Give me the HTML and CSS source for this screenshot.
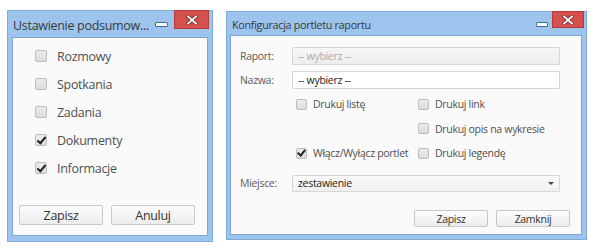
FILE: index.html
```html
<!DOCTYPE html>
<html lang="pl">
<head>
<meta charset="utf-8">
<link rel="stylesheet" href="styles.css">
</head>
<body>
<div class="stage">
  <div class="win win-left">
    <div class="titlebar">
      <span class="title">Ustawienie podsumow...</span>
      <span class="minbtn"></span>
      <span class="closebtn"><svg width="12" height="10" viewBox="0 0 12 10"><path d="M2 1.5 L10 8.5 M10 1.5 L2 8.5" stroke="#6b2a2a" stroke-width="3.4" stroke-linecap="square"/><path d="M2 1.5 L10 8.5 M10 1.5 L2 8.5" stroke="#fff" stroke-width="1.8" stroke-linecap="square"/></svg></span>
    </div>
    <div class="body">
      <ul class="checklist">
        <li><span class="cb"></span>Rozmowy</li>
        <li><span class="cb"></span>Spotkania</li>
        <li><span class="cb"></span>Zadania</li>
        <li><span class="cb checked"></span>Dokumenty</li>
        <li><span class="cb checked"></span>Informacje</li>
      </ul>
      <div class="btnrow">
        <button class="btn wide">Zapisz</button>
        <button class="btn wide">Anuluj</button>
      </div>
    </div>
  </div>

  <div class="win win-right">
    <div class="titlebar small">
      <span class="title">Konfiguracja portletu raportu</span>
      <span class="minbtn"></span>
      <span class="closebtn"><svg width="12" height="10" viewBox="0 0 12 10"><path d="M2 1.5 L10 8.5 M10 1.5 L2 8.5" stroke="#6b2a2a" stroke-width="3.4" stroke-linecap="square"/><path d="M2 1.5 L10 8.5 M10 1.5 L2 8.5" stroke="#fff" stroke-width="1.8" stroke-linecap="square"/></svg></span>
    </div>
    <div class="body form">
      <div class="row">
        <label class="lbl">Raport:</label>
        <div class="input disabled">-- wybierz --</div>
      </div>
      <div class="row">
        <label class="lbl">Nazwa:</label>
        <div class="input">-- wybierz --</div>
      </div>
      <div class="row">
        <span class="lbl"></span>
        <div class="opts">
          <div class="opt"><span class="cb sm"></span>Drukuj listę</div>
          <div class="opt"><span class="cb sm"></span>Drukuj link</div>
          <div class="opt"></div>
          <div class="opt"><span class="cb sm"></span>Drukuj opis na wykresie</div>
          <div class="opt"><span class="cb sm checked"></span>Włącz/Wyłącz portlet</div>
          <div class="opt"><span class="cb sm"></span>Drukuj legendę</div>
        </div>
      </div>
      <div class="row place">
        <label class="lbl">Miejsce:</label>
        <div class="input select">zestawienie<span class="arrow"></span></div>
      </div>
      <div class="btnrow right">
        <button class="btn narrow">Zapisz</button>
        <button class="btn narrow">Zamknij</button>
      </div>
    </div>
  </div>
</div>
</body>
</html>
```
FILE: styles.css
```css
* { box-sizing: border-box; }
html, body { margin: 0; padding: 0; background: #fff; }
body {
  font-family: "Open Sans", "Noto Sans", sans-serif;
  color: #444;
  width: 597px;
  height: 250px;
  overflow: hidden;
}
.stage {
  display: flex;
  align-items: flex-start;
  padding: 10px 0 0 7px;
  gap: 13px;
}
.win {
  background: #9cc4ec;
  border: 1px solid #7eaad8;
  display: flex;
  flex-direction: column;
}
.win-left { width: 206px; height: 232px; padding: 0 4px 5px 4px; }
.win-right { width: 361px; height: 229px; padding: 0 4px 4px 3px; margin-top: 1px; }

.titlebar {
  height: 26px;
  display: flex;
  align-items: flex-start;
}
.titlebar.small { height: 23px; }
.title {
  font-size: 12.5px;
  color: #3a3a3a;
  padding: 6px 0 0 1px;
  flex: 1;
  white-space: nowrap;
  letter-spacing: -0.3px;
}
.titlebar.small .title { font-size: 10.8px; padding: 5px 0 0 2px; letter-spacing: -0.3px; }
.minbtn {
  width: 13px;
  height: 5px;
  border: 1px solid #3d6d9e;
  background: #fff;
  border-radius: 1px;
  margin: 11px 6px 0 0;
}
.titlebar.small .minbtn { margin: 10px 4px 0 0; width: 12px; }
.closebtn {
  width: 35px;
  height: 19px;
  margin-top: -1px;
  margin-right: -1px;
  background: #d6504e;
  border: 1px solid #b33c3a;
  display: flex;
  align-items: center;
  justify-content: center;
}
.titlebar.small .closebtn { width: 32px; height: 17px; margin-right: -2px; }

.body {
  flex: 1;
  background: #fafafa;
  border: 1px solid #7fa6cf;
  display: flex;
  flex-direction: column;
}

.checklist {
  list-style: none;
  margin: 0;
  padding: 4px 0 0 22px;
  flex: 1;
}
.checklist li {
  height: 28px;
  display: flex;
  align-items: center;
  font-size: 12.5px;
  color: #505050;
  letter-spacing: -0.3px;
}
.cb {
  width: 12px;
  height: 12px;
  border: 1px solid #bdbdbd;
  border-radius: 2px;
  background: linear-gradient(#ececec, #dcdcdc);
  margin-right: 10px;
  display: inline-flex;
  align-items: center;
  justify-content: center;
  flex: none;
}
.cb.checked::after {
  content: "";
  width: 3px;
  height: 7px;
  border: solid #222;
  border-width: 0 2px 2px 0;
  transform: rotate(40deg);
  margin-top: -2px;
}
.cb.sm { width: 11px; height: 11px; margin-right: 6px; }
.cb.sm.checked::after { width: 3px; height: 6px; }

.btnrow {
  display: flex;
  gap: 8px;
  padding: 0 0 10px 6px;
}
.btn {
  font-family: inherit;
  font-size: 12.5px;
  color: #333;
  background: linear-gradient(#fdfdfd, #ececec);
  border: 1px solid #c9c9c9;
  border-radius: 2px;
  height: 20px;
  padding: 0;
  letter-spacing: -0.3px;
}
.btn.wide { width: 84px; }
.btn.narrow { width: 74px; height: 17px; font-size: 10.5px; }

.form { padding: 11px 21px 0 9px; font-size: 10.5px; }
.row { display: flex; align-items: center; margin-bottom: 6px; }
.lbl { width: 52px; flex: none; color: #5a5a5a; letter-spacing: -0.3px; }
.input {
  flex: 1;
  height: 18px;
  border: 1px solid #d6d6d6;
  background: #fff;
  padding: 0 5px;
  display: flex;
  align-items: center;
  color: #222;
  letter-spacing: -0.3px;
  border-radius: 1px;
}
.input.disabled { background: linear-gradient(#f6f6f6, #eeeeee); color: #aaa; }
.opts {
  flex: 1;
  display: grid;
  grid-template-columns: 122px 1fr;
  grid-auto-rows: 24.5px;
  padding-left: 4px;
  margin-top: -3px;
}
.opt { display: flex; align-items: center; color: #505050; letter-spacing: -0.3px; }
.row.place { margin-top: 3px; margin-bottom: 0; }
.select { height: 17px; background: linear-gradient(#fbfbfb, #f0f0f0); position: relative; }
.arrow {
  position: absolute;
  right: 5px;
  top: 6px;
  border-left: 3px solid transparent;
  border-right: 3px solid transparent;
  border-top: 3px solid #444;
}
.btnrow.right {
  justify-content: flex-end;
  gap: 8px;
  margin-top: auto;
  margin-right: -21px;
  padding: 0 11px 7px 0;
}
```
